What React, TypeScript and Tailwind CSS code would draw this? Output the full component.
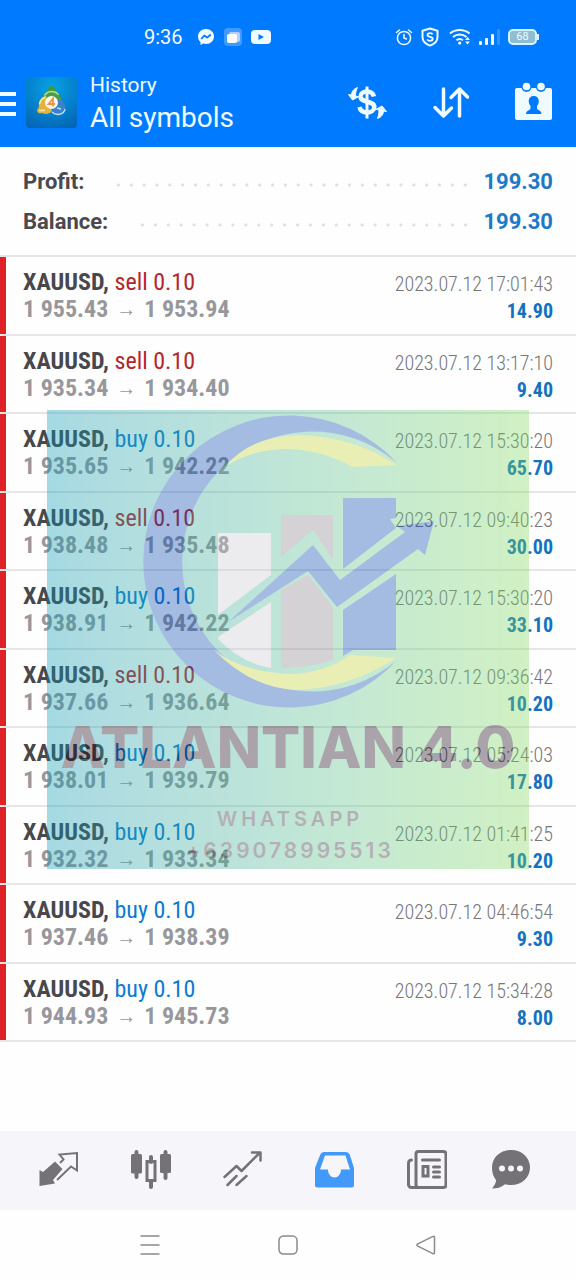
import type { ReactNode } from 'react';

interface Deal {
  symbol: string;
  side: 'buy' | 'sell';
  volume: string;
  open: string;
  close: string;
  time: string;
  profit: string;
}

const deals: Deal[] = [
  { symbol: 'XAUUSD', side: 'sell', volume: '0.10', open: '1 955.43', close: '1 953.94', time: '2023.07.12 17:01:43', profit: '14.90' },
  { symbol: 'XAUUSD', side: 'sell', volume: '0.10', open: '1 935.34', close: '1 934.40', time: '2023.07.12 13:17:10', profit: '9.40' },
  { symbol: 'XAUUSD', side: 'buy', volume: '0.10', open: '1 935.65', close: '1 942.22', time: '2023.07.12 15:30:20', profit: '65.70' },
  { symbol: 'XAUUSD', side: 'sell', volume: '0.10', open: '1 938.48', close: '1 935.48', time: '2023.07.12 09:40:23', profit: '30.00' },
  { symbol: 'XAUUSD', side: 'buy', volume: '0.10', open: '1 938.91', close: '1 942.22', time: '2023.07.12 15:30:20', profit: '33.10' },
  { symbol: 'XAUUSD', side: 'sell', volume: '0.10', open: '1 937.66', close: '1 936.64', time: '2023.07.12 09:36:42', profit: '10.20' },
  { symbol: 'XAUUSD', side: 'buy', volume: '0.10', open: '1 938.01', close: '1 939.79', time: '2023.07.12 05:24:03', profit: '17.80' },
  { symbol: 'XAUUSD', side: 'buy', volume: '0.10', open: '1 932.32', close: '1 933.34', time: '2023.07.12 01:41:25', profit: '10.20' },
  { symbol: 'XAUUSD', side: 'buy', volume: '0.10', open: '1 937.46', close: '1 938.39', time: '2023.07.12 04:46:54', profit: '9.30' },
  { symbol: 'XAUUSD', side: 'buy', volume: '0.10', open: '1 944.93', close: '1 945.73', time: '2023.07.12 15:34:28', profit: '8.00' },
];

function StatusBar() {
  return (
    <div className="flex h-[74px] items-center justify-between pl-36 pr-[37px]">
      <div className="flex items-center">
        <span className="text-[20px] leading-6">9:36</span>
        <svg className="ml-[14px] h-[18px] w-[18px]" viewBox="0 0 18 18">
          <path fill="currentColor" d="M9 1C4.400 1 1 4.300 1 8.600c0 2.300 1 4.200 2.500 5.500V17l2.700-1.400c.9.300 1.800.4 2.800.4 4.600 0 8-3.200 8-7.500S13.600 1 9 1z" />
          <path fill="none" stroke="#007aff" strokeWidth="1.800" strokeLinejoin="round" d="M4.200 11l3.100-3.500 2.900 2.100L13.800 6.500" />
        </svg>
        <svg className="ml-[9px] h-[18px] w-[18px]" viewBox="0 0 18 18">
          <rect width="18" height="18" rx="4" fill="#fff" opacity=".25" />
          <rect x="5" y="4" width="11" height="10" rx="2" fill="#b7cdfb" />
          <rect x="3" y="6" width="10" height="9" rx="2" fill="#fff" />
        </svg>
        <svg className="ml-[9px] h-[18px] w-5" viewBox="0 0 20 18">
          <rect y="2" width="20" height="14" rx="4" fill="currentColor" />
          <path d="M7.500 6v6l5.500-3z" fill="#007aff" />
        </svg>
      </div>

      <div className="flex items-center">
        <svg className="h-[18px] w-[18px]" viewBox="0 0 18 18" fill="none" stroke="currentColor" strokeWidth="1.500" strokeLinecap="round">
          <circle cx="9" cy="10" r="6.600" />
          <path d="M9 6.500V10l2.500 1M1.500 4.500l3-2.500M16.500 4.500l-3-2.500" />
        </svg>
        <svg className="ml-2 h-5 w-[18px]" viewBox="0 0 18 20" fill="none" stroke="currentColor" strokeWidth="2" strokeLinejoin="round">
          <path d="M9 1.500l7.500 2.300v6.500c0 4-3 6.600-7.500 8.300-4.500-1.700-7.500-4.300-7.500-8.300V3.800z" />
          <path strokeWidth="1.800" d="M11.600 7.400c-.4-.9-1.400-1.300-2.600-1.300-1.400 0-2.500.6-2.500 1.800 0 2.700 5.200 1.200 5.200 3.900 0 1.300-1.200 2-2.700 2-1.300 0-2.400-.5-2.800-1.500" />
        </svg>
        <svg className="ml-2.5 h-5 w-[23px]" viewBox="0 0 23 20" fill="none" stroke="currentColor" strokeWidth="2">
          <path d="M1 6.500C6.500 1.800 15 1.800 20.500 6.500M4 10c4-3.400 9.500-3.400 13.500 0M7.500 13.300c2-1.700 4.500-1.700 6.500 0" />
          <circle cx="10.700" cy="16" r="1.600" fill="currentColor" stroke="none" />
          <path d="M16 13l2.500-3 2.500 3zM16 14.500l2.500 3 2.500-3z" fill="currentColor" stroke="none" />
        </svg>
        <svg className="ml-1.5 h-5 w-[22px]" viewBox="0 0 22 20" fill="currentColor">
          <rect x="1" y="14" width="3" height="4" rx="1" />
          <rect x="7" y="11" width="3" height="7" rx="1" />
          <rect x="13" y="7" width="3" height="11" rx="1" />
          <rect x="19" y="2" width="3" height="16" rx="1" opacity=".2" />
        </svg>
        <div className="ml-2 flex items-center">
          <span className="flex h-4 w-[29px] items-center justify-center rounded-[5px] border-2 border-[#d9f2ff] bg-[#8fbdd2] text-[11px] leading-3">
            68
          </span>
          <span className="h-1.5 w-0.5 bg-[#d9f2ff]" />
        </div>
      </div>
    </div>
  );
}

function AppLogo() {
  return (
    <svg className="h-[51px] w-[51px]" viewBox="0 0 51 51">
      <defs>
        <radialGradient id="tile" cx="50%" cy="20%" r="90%">
          <stop offset="0" stopColor="#06a2e6" />
          <stop offset="1" stopColor="#0464b4" />
        </radialGradient>
      </defs>
      <rect width="51" height="51" rx="4" fill="url(#tile)" />
      <circle cx="25.500" cy="12.500" r="3.500" fill="#3f9a3a" />
      <path d="M18 19c3-6 12-6 15.500-1 2 3 2 5 1.500 8l-6 2-8-3z" fill="#4c9d45" />
      <path d="M18.500 18.500c3-5 10-5.500 14-1" fill="none" stroke="#b6de8a" strokeWidth="1.500" />
      <path d="M20 19c-5 1-8 6-7 11l-2 3c0 3 3 4 5 3 3 2 8 1 10-2l-3-8z" fill="#e0b43c" />
      <path d="M13.500 27c1-4 3-6 6-7M13 33.500h6" fill="none" stroke="#f7e79a" strokeWidth="1.500" />
      <path d="M33 22c5 2 7 6 6 11-2 5-9 6-13 2l3-6z" fill="#3a83c8" />
      <path d="M26 35c4 4 12 3 13-3M31 31l4 1" fill="none" stroke="#b9def5" strokeWidth="1.500" />
      <circle cx="25.500" cy="25.500" r="6.500" fill="#fdf7ee" />
      <path d="M27 29.500v-8l-4.500 5.500h6.500" fill="none" stroke="#e8964a" strokeWidth="1.800" />
    </svg>
  );
}

function AppBar() {
  return (
    <div className="flex h-[73px] items-start">
      <button type="button" aria-label="Menu" className="mt-[18px] flex w-4 flex-col gap-[6px]">
        <span className="h-1 bg-current" />
        <span className="h-1 bg-current" />
        <span className="h-1 bg-current" />
      </button>
      <div className="ml-2.5 mt-[3px]">
        <AppLogo />
      </div>
      <div className="ml-[13px] flex-1">
        <p className="text-[21px] leading-[22px]">History</p>
        <h1 className="mt-1.5 text-[28px] leading-8">All symbols</h1>
      </div>
      <div className="mr-[23px] mt-2 flex gap-[45px]">
        <button type="button" aria-label="Currency">
          <svg className="h-10 w-10" viewBox="0 0 40 40" fill="none" stroke="currentColor">
            <path strokeWidth="4.500" d="M27 14.500c-1-3.500-3.500-5-7-5-3.500 0-6.500 1.900-6.500 5 0 6.800 13.800 3.700 13.800 10.500 0 3.400-3.300 5.500-7 5.500-3.900 0-7-1.800-7.800-5.500" />
            <path strokeWidth="3" d="M20 4.500v32" />
            <path fill="currentColor" strokeWidth="1" d="M10.500 5.500C6.500 7 4.600 9.600 4.500 13L1.500 12.500 5.500 18l6-3.300-3-.7c0-3 .5-5.500 2-8.500zM30.500 36.500c4-1.500 5.900-4.100 6-7.500l3 .5-4.500-5.500-6 3.300 3 .7c0 3-.5 5.500-1.500 8.500z" />
          </svg>
        </button>
        <button type="button" aria-label="Sort">
          <svg className="h-10 w-[38px]" viewBox="0 0 38 40" fill="none" stroke="currentColor" strokeWidth="3.500" strokeLinecap="round" strokeLinejoin="round">
            <path d="M11.500 7v27M3 25.500l8.500 8.500 8-8M27.500 34V7M19 15.500L27.500 7l8 8" />
          </svg>
        </button>
        <button type="button" aria-label="Period">
          <svg className="h-10 w-[38px]" viewBox="0 0 38 40">
            <path fill="currentColor" d="M2 6h33a2 2 0 012 2v28a2 2 0 01-2 2H2a2 2 0 01-2-2V8a2 2 0 012-2z" />
            <circle cx="11.500" cy="5" r="5" fill="#007aff" />
            <circle cx="26" cy="5" r="5" fill="#007aff" />
            <circle cx="11.500" cy="4.500" r="3.800" fill="currentColor" />
            <circle cx="26" cy="4.500" r="3.800" fill="currentColor" />
            <path fill="#007aff" d="M18.800 14c3.200 0 5 2 5 5 0 2-.7 3.800-1.800 5v2.400c0 1.500 4.500 1.800 4.500 5.600h-15.500c0-3.800 4.500-4.100 4.500-5.600V24c-1.100-1.200-1.800-3-1.800-5 0-3 1.900-5 5.100-5z" />
          </svg>
        </button>
      </div>
    </div>
  );
}

function SummaryRow({ label, value }: { label: string; value: string }) {
  return (
    <div className="flex h-10 items-center text-[22px] leading-7">
      <dt className="font-bold text-[#4a494e]">{label}</dt>
      <dd className="flex flex-1 items-center font-bold text-[#1e79c6]">
        <span className="ml-7 mr-3 mt-1.5 h-1 flex-1 bg-[radial-gradient(circle,#dedee2_1px,transparent_2px)] bg-[length:13px_4px] bg-repeat-round" />
        {value}
      </dd>
    </div>
  );
}

function DealRow({ deal }: { deal: Deal }) {
  return (
    <li className="flex h-[78px] justify-between border-b-2 border-[#e6e6e8] odd:h-[79px]">
      <div className="w-1.5 bg-[#e02226]" />
      <div className="ml-[17px] flex-1 pt-3 text-[24px] leading-[27px]">
        <p>
          <span className="font-bold text-[#48474c]">{deal.symbol}, </span>
          <span className={deal.side === 'sell' ? 'text-[#b3262c]' : 'text-[#0b7bd0]'}>
            {deal.side} {deal.volume}
          </span>
        </p>
        <p className="flex font-bold text-[#98979b]">
          {deal.open}
          <span className="mx-2 font-['Liberation_Sans'] text-[20px] font-normal">→</span>
          {deal.close}
        </p>
      </div>
      <div className="pr-[23px] pt-[14px] text-right text-[20px] leading-[27px]">
        <p className="font-light text-[#77767a]">{deal.time}</p>
        <p className="font-bold text-[#1272bf]">{deal.profit}</p>
      </div>
    </li>
  );
}

// Translucent promo card that floats over the middle of the list
function Watermark() {
  return (
    <div className="pointer-events-none absolute inset-x-[47px] top-[153px] h-[459px] bg-linear-to-r from-[#0097b2] to-[#7ed957] text-center opacity-35">
      <svg className="h-[300px] w-full" viewBox="47 410 482 300">
        <path fill="#0045b0" d="M397 463A146 146 0 1 0 397 660A130 130 0 1 1 397 463z" />
        <path fill="#c4d22c" d="M225 467Q250 436 300 435Q355 437 396 465L353 467Q320 449 285 449Q250 450 225 467z" />
        <path fill="#c4d22c" d="M213 649Q250 688 297 690Q350 688 396 658L350 655Q325 673 290 674Q240 672 213 649z" />
        <path fill="#cbc9cf" d="M218 533h53v42l-53 40zM218 637l53-35v66q-30-5-53-29z" />
        <path fill="#8c838f" d="M281 515h52v45l-20-30-32 27zM281 590l27-15 25 32v53q-25 8-52 8z" />
        <path fill="#0045b0" d="M343 498h53v20l-6 1 6 9-53 41zM343 610l53-36v76h-43l-10 6z" />
        <path fill="#0045b0" d="M228 622L313 545L340 580L405 532L397 526L434 521L425 555L418 549L337 607L308 571z" />
      </svg>
      <p className="mt-1.5 whitespace-nowrap font-['Inter'] text-[58px] font-extrabold leading-[63px] text-[#110010]">ATLANTIAN 4.0</p>
      <p className="mt-6 pl-1 font-['Inter'] text-[20px] font-semibold leading-8 tracking-[4px] text-[#30202e]">WHATSAPP</p>
      <p className="pl-1 font-['Inter'] text-[21px] font-semibold leading-8 tracking-[3px] text-[#30202e]">+639078995513</p>
    </div>
  );
}

function NavButton({ label, active, children }: { label: string; active?: boolean; children: ReactNode }) {
  return (
    <button
      type="button"
      aria-label={label}
      aria-current={active ? 'page' : undefined}
      className={`flex items-center justify-center ${active ? 'text-[#4299f7]' : 'text-[#747277]'}`}
    >
      <svg className="h-10 w-10" viewBox="0 0 40 40" fill="none" stroke="currentColor">
        {children}
      </svg>
    </button>
  );
}

function BottomNav() {
  return (
    <nav className="grid h-[79px] grid-cols-[repeat(5,92fr)_76fr] bg-[#f6f5f9] pb-0.5 pl-[13px] pr-[27px]">
      <NavButton label="Quotes">
        <path fill="currentColor" stroke="none" d="M16 11.500l7.500 7.500-9.500 11 2 3.500L.5 36V20l3.500 2z" />
        <path strokeWidth="2" d="M21 13l3.500-3.500-4-5L38 3v17.500l-6-4L18 30" />
      </NavButton>
      <NavButton label="Charts">
        <path strokeWidth="4" strokeLinecap="round" d="M5.500 2v25M34.500 2v26M20 7v5M20 32v5" />
        <rect x="0" y="4" width="11" height="19.500" rx="1.500" fill="currentColor" stroke="none" />
        <rect x="29" y="4" width="11" height="19" rx="1.500" fill="currentColor" stroke="none" />
        <rect x="16" y="11.500" width="8" height="19" strokeWidth="3" />
      </NavButton>
      <NavButton label="Trade">
        <path strokeWidth="2.500" strokeLinecap="round" strokeLinejoin="round" d="M1.500 27l12-11 5 5L37 2.500M29 2.500h8.500v8M4.500 35l9-9M13.500 35l10-9" />
      </NavButton>
      <NavButton label="History" active>
        <path fill="currentColor" stroke="none" fillRule="evenodd" d="M9 2h22a4 4 0 013.700 2.500L39 18v17a2.500 2.500 0 01-2.500 2.500h-34A2.500 2.500 0 010 35V18L5.300 4.500A4 4 0 019 2zM10 5.500L5 19.500h8c0 4.500 3 8 6.500 8s6.500-3.500 6.500-8h9L30.500 5.500z" />
      </NavButton>
      <NavButton label="News">
        <rect x="9" y="1.500" width="30" height="36" rx="2.500" strokeWidth="3" />
        <path strokeWidth="3" strokeLinecap="round" strokeLinejoin="round" d="M4.500 10a3 3 0 00-3 3v21.500a3 3 0 003 3h7M15.500 10h17M26.500 17h6M26.500 22h6M26.500 27h6" />
        <rect x="16" y="16.500" width="5" height="9.500" strokeWidth="3" />
      </NavButton>
      <NavButton label="Messages">
        <path fill="currentColor" stroke="none" d="M20 0c10.800 0 19 7.400 19 17.500S30.800 35 20 35c-2 0-4-.3-6-.8C10 37.500 6 38.500 1 38.500c2.500-3 4-5.500 4-8.500-2.700-3.300-4-7.500-4-12.500C1 7.400 9.200 0 20 0z" />
        <path stroke="#f6f5f9" strokeWidth="6" strokeLinecap="round" d="M11 18.500h.01M20 18.500h.01M29 18.500h.01" />
      </NavButton>
    </nav>
  );
}

function SystemNav() {
  return (
    <div className="grid h-[70px] grid-cols-3 px-[81px] text-[#8a898d]">
      <button type="button" aria-label="Recent apps" className="flex items-center justify-center">
        <svg className="h-5 w-5" viewBox="0 0 20 20" fill="none" stroke="currentColor" strokeWidth="1.500">
          <path d="M.5 1h19M.5 10h19M.5 19h19" />
        </svg>
      </button>
      <button type="button" aria-label="Home" className="flex items-center justify-center">
        <svg className="h-5 w-5" viewBox="0 0 20 20" fill="none" stroke="currentColor" strokeWidth="1.500">
          <rect x="1" y="1" width="18" height="18" rx="4.500" />
        </svg>
      </button>
      <button type="button" aria-label="Back" className="flex items-center justify-center">
        <svg className="h-5 w-5" viewBox="0 0 20 20" fill="none" stroke="currentColor" strokeWidth="1.500" strokeLinejoin="round">
          <path d="M17 1.300L1.800 8.800a1.200 1.200 0 000 2.300L17 18.700a1 1 0 001.500-1V2.300a1 1 0 00-1.500-1z" />
        </svg>
      </button>
    </div>
  );
}

export default function App() {
  return (
    <div className="flex min-h-screen flex-col bg-[#fefefe] font-['Roboto',sans-serif]">
      <header className="bg-[#007aff] text-[#f0fbff]">
        <StatusBar />
        <AppBar />
      </header>

      <main className="flex-1">
        <dl className="border-b-2 border-[#e6e6e8] px-[23px] pb-[13px] pt-[15px]">
          <SummaryRow label="Profit:" value="199.30" />
          <SummaryRow label="Balance:" value="199.30" />
        </dl>
        <div className="relative font-['Roboto_Condensed','Roboto',sans-serif]">
          <ul>
            {deals.map((deal, i) => (
              <DealRow key={i} deal={deal} />
            ))}
          </ul>
          <Watermark />
        </div>
      </main>

      <BottomNav />
      <SystemNav />
    </div>
  );
}
